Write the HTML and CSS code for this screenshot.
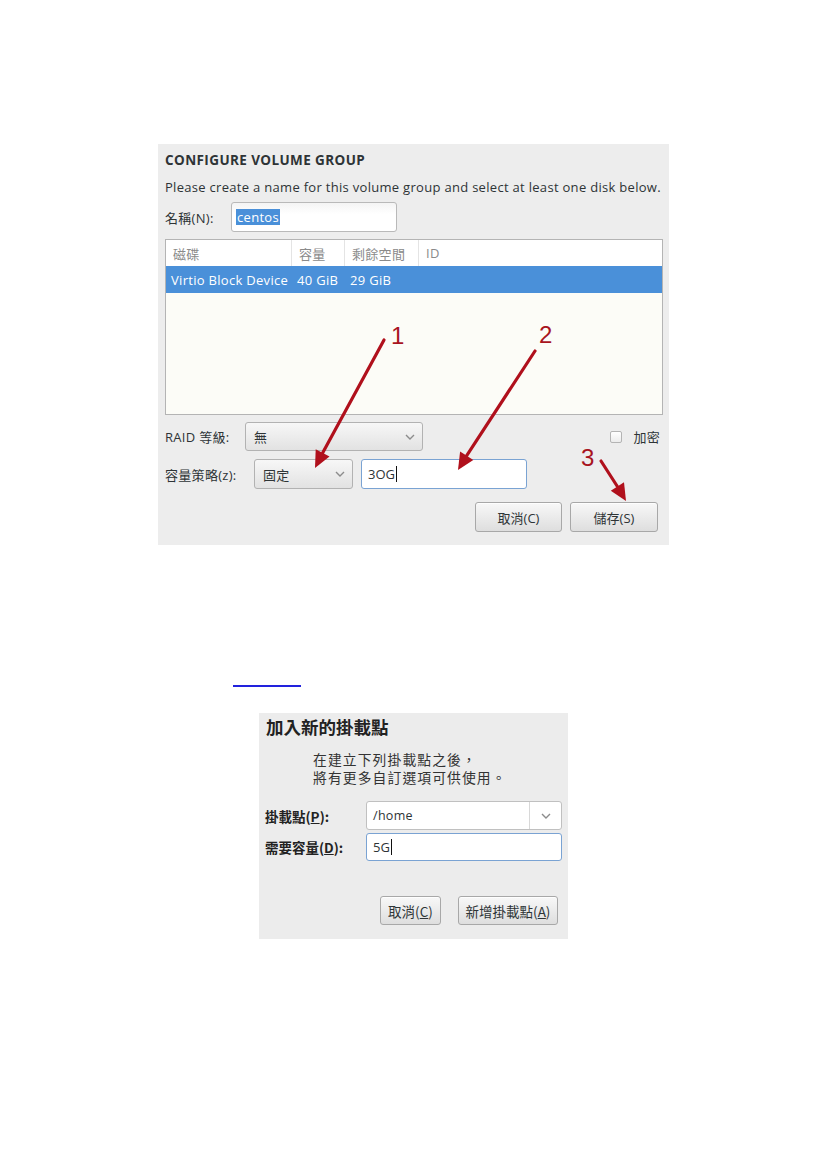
FILE: index.html
```html
<!DOCTYPE html>
<html lang="zh-Hant">
<head>
<meta charset="utf-8">
<title>Configure Volume Group</title>
<link rel="stylesheet" href="styles.css">
</head>
<body>
<div class="page">
  <div class="vg">
    <div class="vg-title">CONFIGURE VOLUME GROUP</div>
    <div class="vg-sub">Please create a name for this volume group and select at least one disk below.</div>
    <div class="row name-row">
      <span class="lbl lbl-name">名稱(N):</span>
      <div class="entry name-entry"><span class="sel-text">centos</span></div>
    </div>
    <div class="disk-table">
      <div class="thead">
        <div class="c c1">磁碟</div>
        <div class="c c2">容量</div>
        <div class="c c3">剩餘空間</div>
        <div class="c c4">ID</div>
      </div>
      <div class="trow sel">
        <div class="c c1">Virtio Block Device</div>
        <div class="c c2">40 GiB</div>
        <div class="c c3">29 GiB</div>
        <div class="c c4"></div>
      </div>
    </div>
    <div class="row raid-row">
      <span class="lbl lbl-raid">RAID 等級:</span>
      <div class="combo raid-combo">
        <span>無</span>
        <svg class="chev" viewBox="0 0 10 6" width="10" height="6"><polyline points="1,1 5,5 9,1"/></svg>
      </div>
      <div class="grow"></div>
      <span class="check"></span>
      <span class="check-lbl">加密</span>
    </div>
    <div class="row size-row">
      <span class="lbl lbl-size">容量策略(z):</span>
      <div class="combo size-combo">
        <span>固定</span>
        <svg class="chev" viewBox="0 0 10 6" width="10" height="6"><polyline points="1,1 5,5 9,1"/></svg>
      </div>
      <div class="entry focus size-entry"><span class="caret">3OG</span></div>
    </div>
    <div class="btn-row">
      <button class="btn vg-cancel">取消(C)</button>
      <button class="btn vg-save">儲存(S)</button>
    </div>
    <svg class="annot" viewBox="0 0 511 401" width="511" height="401">
      <g class="arrow">
        <line x1="226" y1="196" x2="164.6" y2="308.9"/>
        <polygon points="157,324 171.5,312.6 157.7,305.2"/>
        <line x1="377" y1="207" x2="308.7" y2="311.6"/>
        <polygon points="300,326 315.3,316 302.1,307.4"/>
        <line x1="443" y1="317" x2="459.4" y2="342.5"/>
        <polygon points="468,357 466,338.3 452.8,346.7"/>
      </g>
      <text class="num" x="233" y="200">1</text>
      <text class="num" x="381" y="199">2</text>
      <text class="num" x="423" y="322">3</text>
    </svg>
  </div>

  <div class="link-line"><a class="doc-link" href="#">&nbsp;</a></div>

  <div class="mp">
    <div class="mp-title">加入新的掛載點</div>
    <div class="mp-text">
      <div class="mp-line">在建立下列掛載點之後，</div>
      <div class="mp-line">將有更多自訂選項可供使用。</div>
    </div>
    <div class="mp-row mp-row1">
      <span class="mp-lbl">掛載點(<u>P</u>):</span>
      <div class="combo mp-combo">
        <span class="mp-val">/home</span>
        <span class="mp-sep"></span>
        <svg class="chev" viewBox="0 0 10 6" width="10" height="6"><polyline points="1,1 5,5 9,1"/></svg>
      </div>
    </div>
    <div class="mp-row mp-row2">
      <span class="mp-lbl">需要容量(<u>D</u>):</span>
      <div class="entry focus mp-entry"><span class="caret">5G</span></div>
    </div>
    <div class="mp-btns">
      <button class="btn mp-cancel">取消(<u>C</u>)</button>
      <button class="btn mp-add">新增掛載點(<u>A</u>)</button>
    </div>
  </div>
</div>
</body>
</html>
```

FILE: styles.css
```css
* { box-sizing: border-box; }
html, body { margin: 0; padding: 0; background: #ffffff; }
body {
  font-family: "Open Sans", "Noto Sans CJK TC", sans-serif;
  color: #2e3436;
}
.page { padding-top: 144px; }

/* ---------- volume group dialog ---------- */
.vg {
  position: relative;
  margin-left: 158px;
  width: 511px;
  height: 401px;
  background: #ededed;
  padding: 7px 6px 0 7px;
  font-size: 13px;
  letter-spacing: 0.3px;
}
.vg-title {
  font-weight: 700;
  font-size: 13.5px;
  line-height: 18px;
  letter-spacing: 0.4px;
  color: #2e3436;
}
.vg-sub {
  margin-top: 9px;
  line-height: 18px;
  white-space: nowrap;
}
.row { display: flex; align-items: center; }
.lbl { white-space: nowrap; }
.lbl-name { width: 66px; }
.lbl-raid { width: 80px; }
.lbl-size { width: 89px; }
.name-row { margin-top: 6px; height: 30px; }

.entry {
  height: 100%;
  background: linear-gradient(#f4f4f4, #ffffff 40%);
  border: 1px solid #b9b9b9;
  border-radius: 3px;
  display: flex;
  align-items: center;
}
.entry.focus { border-color: #7aa3d3; background: #ffffff; }
.name-entry { width: 166px; padding-left: 4px; }
.sel-text {
  background: #4a90d9;
  color: #ffffff;
  line-height: 16px;
  padding: 0 1px;
}
.caret { border-right: 1px solid #111; padding-right: 1px; line-height: 16px; }

.disk-table {
  margin-top: 7px;
  width: 498px;
  height: 176px;
  border: 1px solid #b4b4b4;
  background: #fcfcf7;
}
.thead, .trow { display: grid; grid-template-columns: 126px 53px 74px 1fr; }
.thead {
  height: 26px;
  background: #ffffff;
  color: #8a8a8a;
  font-size: 13px;
}
.thead .c {
  display: flex;
  align-items: center;
  padding-left: 7px;
  border-right: 1px solid #e4e4e4;
}
.thead .c4 { border-right: 0; }
.trow { height: 27px; }
.trow .c { display: flex; align-items: center; padding-left: 5px; white-space: nowrap; }
.trow.sel { background: #4a90d9; color: #ffffff; }

.combo {
  height: 100%;
  display: flex;
  align-items: center;
  background: linear-gradient(#f7f7f7, #e2e2e2);
  border: 1px solid #b2b2b2;
  border-radius: 3px;
  padding-left: 8px;
  padding-right: 7px;
}
.combo > span:first-child { flex: 1; }
.chev { fill: none; stroke: #8c8c8c; stroke-width: 1.4; }

.raid-row { margin-top: 7px; height: 29px; }
.raid-combo { width: 178px; }
.grow { flex: 1; }
.check {
  width: 12px;
  height: 12px;
  border: 1px solid #b4b4b4;
  border-radius: 2px;
  background: linear-gradient(#ffffff, #ececec);
  margin-right: 11px;
}
.check-lbl { margin-right: 3px; font-size: 13px; }

.size-row { margin-top: 8px; height: 30px; }
.size-combo { width: 99px; }
.size-entry { width: 166px; margin-left: 8px; padding-left: 6px; letter-spacing: 0; }

.btn-row {
  margin-top: 13px;
  height: 30px;
  display: flex;
  justify-content: flex-end;
  gap: 8px;
  padding-right: 5px;
}
.btn {
  font: inherit;
  color: #2e3436;
  height: 100%;
  background: linear-gradient(#f8f8f8, #dedede);
  border: 1px solid #a8a8a8;
  border-radius: 3px;
  box-shadow: 0 1px 0 rgba(255,255,255,0.8) inset;
  padding: 0;
}
.vg-cancel { width: 87px; }
.vg-save { width: 88px; }

.annot { position: absolute; left: 0; top: 0; pointer-events: none; }
.arrow line { stroke: #b0101c; stroke-width: 3.2; stroke-linecap: round; }
.arrow polygon { fill: #b0101c; }
.num {
  fill: #a8141e;
  font-family: "Liberation Sans", Arial, sans-serif;
  font-size: 24px;
  letter-spacing: 0;
}

/* ---------- link ---------- */
.link-line { margin-top: 121px; height: 20px; line-height: 20px; }
.doc-link {
  display: inline-block;
  margin-left: 233px;
  width: 68px;
  color: #ffffff;
  text-decoration: none;
  border-bottom: 2px solid #2222dd;
  line-height: 18px;
}

/* ---------- mount point dialog ---------- */
.mp {
  margin-top: 27px;
  margin-left: 259px;
  width: 309px;
  height: 226px;
  background: #ececec;
  padding: 3px 6px 0 7px;
  font-family: "Noto Sans CJK TC", "Open Sans", sans-serif;
}
.mp-title {
  font-size: 17.5px;
  font-weight: 700;
  line-height: 22px;
  color: #222;
}
.mp-text {
  margin-top: 11px;
  margin-left: 47px;
  font-size: 13.8px;
  letter-spacing: 1.1px;
  color: #333;
}
.mp-line { line-height: 20px; height: 18px; }
.mp-row { display: flex; align-items: center; }
.mp-row1 { margin-top: 16px; height: 29px; }
.mp-row2 { margin-top: 3px; height: 28px; }
.mp-lbl {
  width: 100px;
  font-size: 13.5px;
  font-weight: 700;
  color: #222;
  white-space: nowrap;
  margin-left: -1px;
  margin-right: 1px;
}
.mp-combo {
  width: 196px;
  background: #ffffff;
  border-color: #c0c0c0;
  padding-left: 6px;
  padding-right: 0;
  font-family: "Open Sans", sans-serif;
  font-size: 12.5px;
  letter-spacing: 0.3px;
}
.mp-sep { width: 1px; align-self: stretch; background: #d8d8d8; margin-right: 11px; }
.mp-combo .chev { margin-right: 10px; }
.mp-entry { width: 196px; padding-left: 6px; font-family: "Open Sans", sans-serif; font-size: 13px; }
.mp-btns {
  margin-top: 35px;
  height: 29px;
  display: flex;
  justify-content: flex-end;
  gap: 17px;
  padding-right: 4px;
}
.mp-btns .btn { font-size: 13.5px; }
.mp-cancel { width: 61px; }
.mp-add { width: 100px; }
```
